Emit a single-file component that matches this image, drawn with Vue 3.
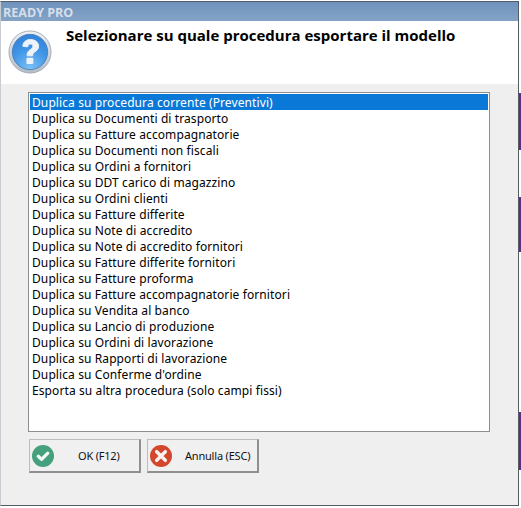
<script setup>
const items = [
  'Duplica su procedura corrente (Preventivi)',
  'Duplica su Documenti di trasporto',
  'Duplica su Fatture accompagnatorie',
  'Duplica su Documenti non fiscali',
  'Duplica su Ordini a fornitori',
  'Duplica su DDT carico di magazzino',
  'Duplica su Ordini clienti',
  'Duplica su Fatture differite',
  'Duplica su Note di accredito',
  'Duplica su Note di accredito fornitori',
  'Duplica su Fatture differite fornitori',
  'Duplica su Fatture proforma',
  'Duplica su Fatture accompagnatorie fornitori',
  'Duplica su Vendita al banco',
  'Duplica su Lancio di produzione',
  'Duplica su Ordini di lavorazione',
  'Duplica su Rapporti di lavorazione',
  "Duplica su Conferme d'ordine",
  'Esporta su altra procedura (solo campi fissi)'
]
</script>

<template>
  <div class="screen">
    <div class="strip s1"></div>
    <div class="strip s2"></div>
    <div class="strip s3"></div>
    <div class="window">
      <div class="titlebar">READY PRO</div>
      <div class="header">
        <svg class="qicon" width="44" height="44" viewBox="0 0 46 46">
          <defs>
            <linearGradient id="ring" x1="0" y1="0" x2="0" y2="1">
              <stop offset="0" stop-color="#eef0f3" />
              <stop offset="1" stop-color="#b4bcc5" />
            </linearGradient>
            <radialGradient id="ball" cx="0.5" cy="0.95" r="1">
              <stop offset="0" stop-color="#7cc0f4" />
              <stop offset="0.55" stop-color="#3f95e6" />
              <stop offset="1" stop-color="#2f7fd6" />
            </radialGradient>
          </defs>
          <circle cx="23" cy="23" r="22" fill="url(#ring)" stroke="#a3adb8" stroke-width="1" />
          <circle cx="23" cy="23" r="18.5" fill="url(#ball)" stroke="#3d76b4" stroke-width="0.8" />
          <path d="M15.5 17 C16 11.5 20 10 23.5 10 C28 10 32 12.5 32 17 C32 20.5 29.5 22 27.5 23.3 C26 24.3 25.8 25.2 25.8 27 L20 27 C20 23.8 20.8 22.3 23 20.8 C25 19.4 26 18.6 26 17 C26 15.4 25 14.6 23.4 14.6 C21.6 14.6 20.8 15.8 20.6 17.6 Z" fill="#eef3f9" stroke="#eef3f9" stroke-width="1" />
          <rect x="19.3" y="29" width="7.2" height="6.5" rx="1" fill="#eef3f9" />
        </svg>
        <div class="heading">Selezionare su quale procedura esportare il modello</div>
      </div>
      <div class="body">
        <ul class="list">
          <li v-for="(item, i) in items" :key="i" :class="{ selected: i === 0 }">{{ item }}</li>
        </ul>
        <div class="buttons">
          <button class="btn" type="button">
            <svg class="ico" width="22" height="22" viewBox="0 0 23 23">
              <circle cx="11.5" cy="11.5" r="11.5" fill="#46a07e" />
              <path d="M6.5 11.8 L10 15 L16.5 8.5" fill="none" stroke="#f4faf7" stroke-width="3.4" stroke-linecap="round" stroke-linejoin="round" />
            </svg>
            <span class="ok">OK (F12)</span>
          </button>
          <button class="btn" type="button">
            <svg class="ico" width="22" height="22" viewBox="0 0 23 23">
              <circle cx="11.5" cy="11.5" r="11.5" fill="#d4472f" />
              <path d="M7 7 L16 16 M16 7 L7 16" fill="none" stroke="#fbf1ee" stroke-width="3.6" stroke-linecap="round" />
            </svg>
            <span class="cancel">Annulla (ESC)</span>
          </button>
        </div>
      </div>
    </div>
  </div>
</template>

<style>
html, body { margin: 0; background: #fff; }
</style>

<style scoped>
.screen {
  position: relative;
  width: 521px;
  height: 508px;
  padding-top: 1px;
  box-sizing: border-box;
  overflow: hidden;
  font-family: "Noto Sans", sans-serif;
}
.strip {
  position: absolute;
  left: 519px;
  width: 2px;
  background: #642a80;
}
.s1 { top: 93px; height: 57px; }
.s2 { top: 197px; height: 55px; }
.s3 { top: 412px; height: 58px; }
.window {
  position: relative;
  width: 519px;
  height: 505px;
  box-sizing: border-box;
  border: 1px solid #555c66;
  border-left-color: #c8ccd0;
  background: #efefef;
  display: flex;
  flex-direction: column;
}
.titlebar {
  height: 19px;
  padding-left: 2px;
  background: linear-gradient(#6f93bd, #84a3c6);
  color: #d6dfe9;
  font: bold 12.5px/22px "Open Sans", sans-serif;
}
.header {
  height: 63px;
  background: #fff;
  display: flex;
  flex: none;
}
.qicon { margin: 9px 0 0 7px; }
.heading {
  margin: 4px 0 0 14px;
  font: bold 15px/20px "Open Sans", sans-serif;
  color: #000;
}
.body {
  flex: 1;
  padding: 8px 0 0 27px;
}
.list {
  list-style: none;
  margin: 0;
  padding: 1px;
  width: 462px;
  height: 340px;
  box-sizing: border-box;
  border: 1px solid #8e8e8e;
  background: #fff;
}
.list li {
  height: 16px;
  line-height: 18px;
  padding-left: 2px;
  font-size: 12px;
  letter-spacing: 0.1px;
  color: #000;
  white-space: nowrap;
}
.list li.selected {
  background: #0a78d7;
  color: #fff;
}
.buttons {
  display: flex;
  gap: 6px;
  margin: 7px 0 0 1px;
}
.btn {
  width: 112px;
  height: 34px;
  padding: 0;
  box-sizing: border-box;
  border: 1px solid #bdbdbd;
  border-right: 2px solid #8f8f8f;
  border-bottom: 2px solid #8f8f8f;
  background: #f0f0f0;
  display: flex;
  align-items: center;
  font: 11px "Noto Sans", sans-serif;
  letter-spacing: -0.2px;
  color: #111;
  white-space: nowrap;
}
.ico { margin-left: 2px; flex: none; }
.ok { margin-left: 24px; }
.cancel { margin-left: 13px; }
</style>
